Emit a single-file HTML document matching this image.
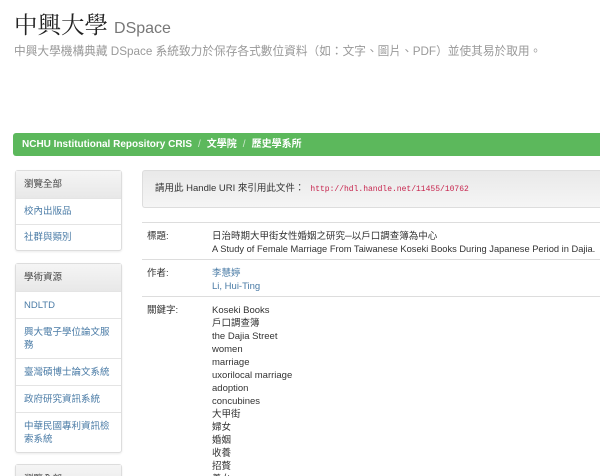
<!DOCTYPE html>
<html><head><meta charset="utf-8"><style>
*{margin:0;padding:0;box-sizing:border-box}
html,body{width:600px;height:476px;overflow:hidden}
body{background:#fff;font-family:"Liberation Sans","Noto Sans CJK TC",sans-serif;font-size:10px;color:#333;position:relative}
.a{position:absolute}
.t1{left:14px;top:8px;font-family:"Noto Serif CJK SC",serif;font-size:23.5px;color:#222;line-height:30px;white-space:nowrap}
.t1 span{font-family:"Liberation Sans",sans-serif;font-size:16px;color:#777}
.sub{left:14px;top:42px;font-size:11.7px;color:#999;white-space:nowrap}
.bar{left:13px;top:133px;width:587px;height:23px;background:#5cb85c;border-radius:3px 0 0 3px;color:#fff;font-weight:bold;font-size:10px;line-height:23px;padding-left:9px;white-space:nowrap}
.bar i{font-style:normal;color:#cfe9cf;font-weight:normal;margin:0 6px}
.pn{left:15px;width:107px;border:1px solid #ddd;border-radius:3px;box-shadow:0 1px 2px rgba(0,0,0,.08);background:#fff}
.pn div{border-top:1px solid #e4e4e4;padding:0 8px;color:#4a7ba6;font-size:9.5px;line-height:13px;display:flex;align-items:center}
.pn .h{background:linear-gradient(#f5f5f5,#e8e8e8);border-top:none;color:#444}
.well{left:142px;top:170px;width:458px;height:38px;background:linear-gradient(#e9e9e9,#f5f5f5);border:1px solid #ddd;border-right:none;border-radius:3px 0 0 3px;line-height:36px;padding-left:12px;font-size:9.5px;color:#333}
.well code{font-family:"Liberation Mono",monospace;font-size:8px;color:#c7254e;margin-left:6px}
.row{left:142px;width:458px;border-top:1px solid #ddd;line-height:13px;font-size:9.5px}
.row .l{position:absolute;left:5px;top:7px;color:#333}
.row .v{position:absolute;left:70px;top:7px;white-space:nowrap}
.lnk{color:#4a7ba6}
</style></head><body>
<div class="a t1">中興大學 <span>DSpace</span></div>
<div class="a sub">中興大學機構典藏 DSpace 系統致力於保存各式數位資料（如：文字、圖片、PDF）並使其易於取用。</div>
<div class="a bar">NCHU Institutional Repository CRIS<i>/</i>文學院<i>/</i>歷史學系所</div>

<div class="a pn" style="top:170px">
<div class="h" style="height:27px">瀏覽全部</div>
<div style="height:26px">校內出版品</div>
<div style="height:26px">社群與類別</div>
</div>
<div class="a pn" style="top:263px">
<div class="h" style="height:27px">學術資源</div>
<div style="height:27px">NDLTD</div>
<div style="height:40px">興大電子學位論文服務</div>
<div style="height:27px">臺灣碩博士論文系統</div>
<div style="height:27px">政府研究資訊系統</div>
<div style="height:40px">中華民國專利資訊檢索系統</div>
</div>
<div class="a pn" style="top:464px;height:30px"><div class="h" style="height:28px">瀏覽全部</div></div>

<div class="a well">請用此 Handle URI 來引用此文件：<code>http://hdl.handle.net/11455/10762</code></div>

<div class="a row" style="top:222px;height:37px"><span class="l">標題:</span><span class="v">日治時期大甲街女性婚姻之研究─以戶口調查簿為中心<br><span style="font-size:9.3px">A Study of Female Marriage From Taiwanese Koseki Books During Japanese Period in Dajia.</span></span></div>
<div class="a row" style="top:259px;height:37px"><span class="l">作者:</span><span class="v lnk">李慧婷<br>Li, Hui-Ting</span></div>
<div class="a row" style="top:296px;height:180px"><span class="l">關鍵字:</span><span class="v">Koseki Books<br>戶口調查簿<br>the Dajia Street<br>women<br>marriage<br>uxorilocal marriage<br>adoption<br>concubines<br>大甲街<br>婦女<br>婚姻<br>收養<br>招贅<br>養女</span></div>
</body></html>
